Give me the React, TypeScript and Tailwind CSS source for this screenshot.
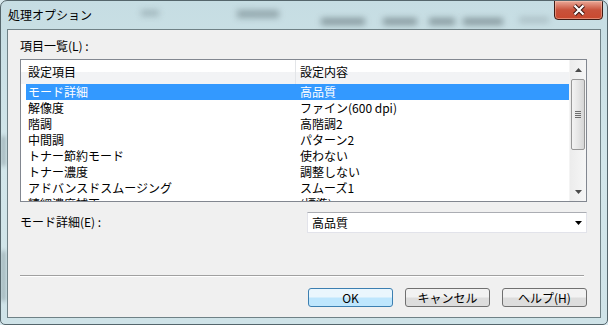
import React from "react";

const rows: [string, string][] = [
  ["モード詳細", "高品質"],
  ["解像度", "ファイン(600 dpi)"],
  ["階調", "高階調2"],
  ["中間調", "パターン2"],
  ["トナー節約モード", "使わない"],
  ["トナー濃度", "調整しない"],
  ["アドバンスドスムージング", "スムーズ1"],
  ["精細濃度補正", "(標準)"],
];

function Tri({ up }: { up?: boolean }) {
  return (
    <svg width="7" height="4" viewBox="0 0 7 4">
      {up ? <path d="M0 4 L3.5 0 L7 4 Z" fill="#4a4a4a" /> : <path d="M0 0 L7 0 L3.5 4 Z" fill="#4a4a4a" />}
    </svg>
  );
}

export default function App() {
  return (
    <div className="w-[608px] h-[325px] overflow-hidden bg-[#d8e9ee] font-['Noto_Sans_CJK_JP','Liberation_Sans',sans-serif] text-[12px] leading-[16px] text-black">
      <div className="relative w-[608px] h-[325px] flex flex-col rounded-t-[7px] rounded-b-[5px] border border-[#55666c] bg-gradient-to-b from-[#c6dde3] via-[#d2e6ea] to-[#cfe3e8] overflow-hidden">
        {/* blurred background behind glass */}
        <div className="absolute left-[140px] top-[9px] w-[18px] h-[6px] bg-[#8fa4aa] blur-[3px] opacity-70" />
        <div className="absolute left-[236px] top-[9px] w-[42px] h-[8px] bg-[#7d9096] blur-[3px] opacity-70" />
        <div className="absolute left-[320px] top-[17px] w-[44px] h-[7px] bg-[#6c7d82] blur-[3px] opacity-70" />
        <div className="absolute left-[382px] top-[17px] w-[34px] h-[7px] bg-[#6c7d82] blur-[3px] opacity-70" />
        <div className="absolute left-[428px] top-[17px] w-[26px] h-[7px] bg-[#6c7d82] blur-[3px] opacity-70" />
        <div className="absolute left-[462px] top-[17px] w-[40px] h-[7px] bg-[#6c7d82] blur-[3px] opacity-70" />
        <div className="absolute left-[518px] top-[16px] w-[30px] h-[6px] bg-[#8fa0a6] blur-[3px] opacity-50" />
        <div className="absolute left-[1px] top-[135px] w-[3px] h-[30px] bg-[#5f7076] blur-[2px] opacity-60" />
        <div className="absolute left-[1px] top-[250px] w-[3px] h-[50px] bg-[#5f7076] blur-[2px] opacity-60" />

        {/* title bar */}
        <div className="relative h-[28px] flex items-start justify-between shrink-0">
          <div className="pl-[7px] pt-[6px] text-[12px] leading-[16px] text-black">処理オプション</div>
          <div className="mr-[4px] mt-[-1px] w-[49px] h-[20px] rounded-b-[4px] border border-[#3f1b14] bg-gradient-to-b from-[#e9a898] via-[#c8523b] to-[#c9492f] flex items-center justify-center shadow-[inset_0_0_0_1px_rgba(255,210,190,0.45)]">
            <svg width="14" height="12" viewBox="0 0 14 12">
              <path d="M2.5 1.5 L11.5 10.5 M11.5 1.5 L2.5 10.5" stroke="#3a1510" strokeWidth="4.2" fill="none" />
              <path d="M2.5 1.5 L11.5 10.5 M11.5 1.5 L2.5 10.5" stroke="#ffffff" strokeWidth="2.2" fill="none" />
            </svg>
          </div>
        </div>

        {/* client area */}
        <div className="relative mx-[6px] mb-[6px] flex-1 border border-[#6f8186] bg-[#f0f0f0] pl-[12px] pr-[13px] pt-[8px] flex flex-col">
          <div>項目一覧(L) :</div>

          {/* list view */}
          <div className="mt-[5px] h-[143px] border border-[#828790] bg-white flex">
            <div className="flex-1 flex flex-col overflow-hidden">
              <div className="h-[24px] shrink-0 flex items-center bg-gradient-to-b from-[#ffffff] from-50% to-[#f2f3f5] to-50%">
                <div className="w-[274px] pl-[7px]">設定項目</div>
                <div className="w-px h-[24px] bg-[#e3e5e8]" />
                <div className="pl-[4px]">設定内容</div>
              </div>
              {rows.map(([a, b], i) => (
                <div
                  key={a}
                  className={
                    i === 0
                      ? "ml-[5px] h-[16px] shrink-0 flex bg-[#3399ff] text-white"
                      : "ml-[5px] h-[16px] shrink-0 flex"
                  }
                >
                  <div className="w-[274px] pl-[2px] whitespace-nowrap">{a}</div>
                  <div className="whitespace-nowrap">{b}</div>
                </div>
              ))}
            </div>
            {/* scrollbar */}
            <div className="w-[17px] shrink-0 flex flex-col bg-gradient-to-r from-[#ececec] to-[#f6f6f6] border-l border-[#f4f4f4]">
              <div className="h-[19px] flex items-center justify-center">
                <Tri up />
              </div>
              <div className="mx-[1px] h-[71px] rounded-[2px] border border-[#979797] bg-gradient-to-r from-[#f3f3f3] via-[#e6e6e6] to-[#d6d6d6] flex flex-col items-center justify-center gap-[1px]">
                <div className="w-[6px] h-px bg-[#6e6e6e]" />
                <div className="w-[6px] h-px bg-[#6e6e6e]" />
                <div className="w-[6px] h-px bg-[#6e6e6e]" />
                <div className="w-[6px] h-px bg-[#6e6e6e]" />
              </div>
              <div className="flex-1" />
              <div className="h-[17px] flex items-center justify-center pb-[2px]">
                <Tri />
              </div>
            </div>
          </div>

          {/* combo row */}
          <div className="mt-[10px] flex items-center justify-between">
            <div className="-mt-[2px]">モード詳細(E) :</div>
            <div className="w-[280px] h-[21px] border border-[#e2e3ea] border-t-[#abadb3] bg-white flex items-center justify-between pl-[4px] pr-[4px]">
              <span>高品質</span>
              <svg width="7" height="4" viewBox="0 0 7 4">
                <path d="M0 0 L7 0 L3.5 4 Z" fill="#000" />
              </svg>
            </div>
          </div>

          {/* separator */}
          <div className="mt-[42px] mr-[3px] h-px bg-[#a0a0a0] shadow-[0_1px_0_#ffffff]" />

          {/* buttons */}
          <div className="mt-[12px] flex justify-end gap-[12px]">
            <div className="w-[85px] h-[19px] rounded-[3px] border border-[#3c7fb1] bg-gradient-to-b from-[#eaf6fd] from-45% to-[#bee6fd] to-55% flex items-center justify-center">
              OK
            </div>
            <div className="w-[85px] h-[19px] rounded-[3px] border border-[#707070] bg-gradient-to-b from-[#f2f2f2] from-45% to-[#dddddd] to-55% flex items-center justify-center">
              キャンセル
            </div>
            <div className="w-[85px] h-[19px] rounded-[3px] border border-[#707070] bg-gradient-to-b from-[#f2f2f2] from-45% to-[#dddddd] to-55% flex items-center justify-center">
              ヘルプ(H)
            </div>
          </div>
        </div>
      </div>
    </div>
  );
}
